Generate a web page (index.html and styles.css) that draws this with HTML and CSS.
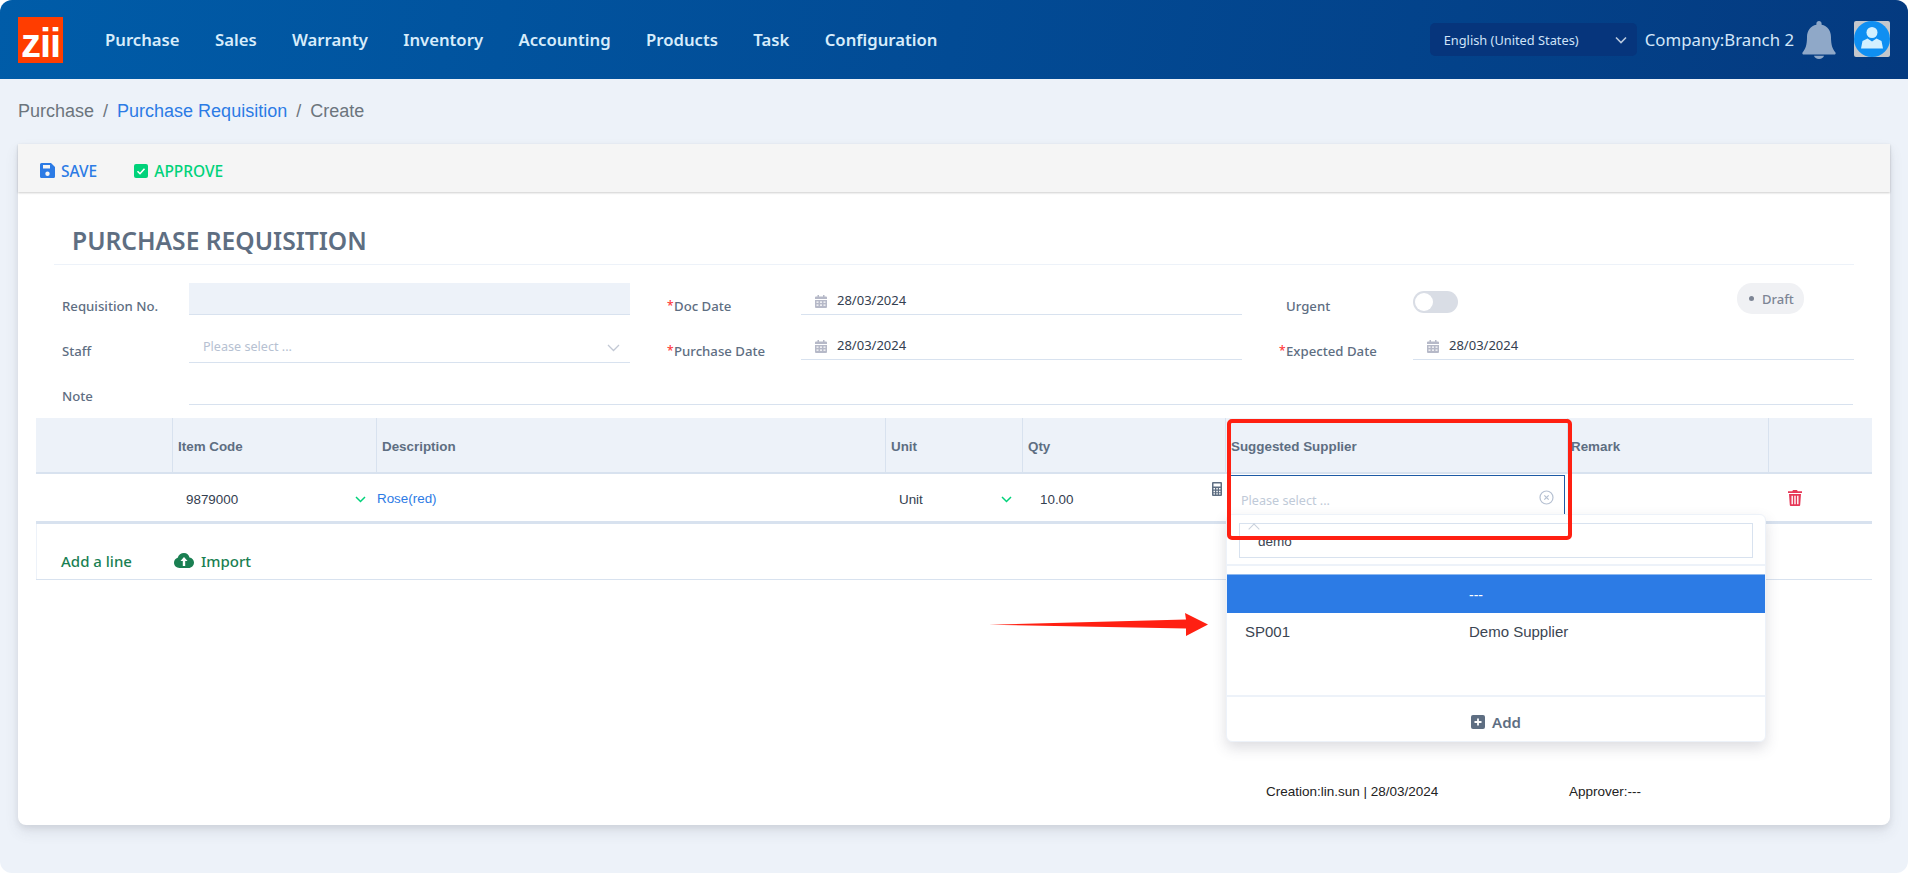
FILE: index.html
```html
<!DOCTYPE html>
<html lang="en">

<head>
  <meta charset="UTF-8" />
  <meta name="viewport" content="width=device-width, initial-scale=1.0" />
  <title>Purchase Requisition</title>
  <link rel="stylesheet" href="styles.css">
</head>

<body>
  <div class="app">
    <header class="topbar">
      <div class="logo">zii</div>
      <nav class="nav">
        <a>Purchase</a>
        <a>Sales</a>
        <a>Warranty</a>
        <a>Inventory</a>
        <a>Accounting</a>
        <a>Products</a>
        <a>Task</a>
        <a>Configuration</a>
      </nav>
      <div class="topbar-right">
        <div class="lang">
          <span>English (United States)</span>
          <svg class="chev" width="12" height="8" viewBox="0 0 12 8"><path d="M1 1.5l5 5 5-5" fill="none" stroke="#b9c9de" stroke-width="1.6"/></svg>
        </div>
        <div class="company">Company:Branch 2</div>
        <svg class="bell" width="34" height="38" viewBox="0 0 34 38">
          <path d="M17 0c1.500 0 2.600 1.100 2.600 2.600v1.200C25.500 5 29 10 29 16c0 8 1.500 12 4.300 15.200.8 1 .2 2.300-1 2.300H1.700c-1.200 0-1.800-1.300-1-2.300C3.500 28 5 24 5 16 5 10 8.500 5 14.400 3.800V2.600C14.400 1.100 15.500 0 17 0z" fill="#8fa8c8"/>
          <path d="M12 34.800h10c-.4 2-2.400 3.200-5 3.200s-4.600-1.200-5-3.200z" fill="#8fa8c8"/>
        </svg>
        <div class="avatar">
          <svg width="36" height="36" viewBox="0 0 36 36">
            <rect width="36" height="36" rx="2" fill="#c4c7cc"/>
            <circle cx="18" cy="18" r="18" fill="#0f8ff2"/>
            <circle cx="18" cy="11.500" r="5.500" fill="#d3f0ff"/>
            <path d="M13.500 17.500l4.500 3 4.500-3 5 2.500 1.500 7.500H7l1.500-7.500z" fill="#d3f0ff"/>
          </svg>
        </div>
      </div>
    </header>

    <main class="content">
      <div class="breadcrumb">
        <span>Purchase</span><i>/</i><a>Purchase Requisition</a><i>/</i><span>Create</span>
      </div>

      <section class="card">
        <div class="toolbar">
          <a class="tool tool-save">
            <svg width="15" height="15" viewBox="0 0 15 15"><path d="M1.500 0H11l4 4v9.500A1.500 1.500 0 0 1 13.500 15h-12A1.500 1.500 0 0 1 0 13.500v-12A1.500 1.500 0 0 1 1.500 0zM3 2v3.500h7V2zm4.500 6.500a2.200 2.200 0 1 0 0 4.400 2.200 2.200 0 0 0 0-4.400z" fill="#2c7be5" fill-rule="evenodd"/></svg>
            SAVE
          </a>
          <a class="tool tool-approve">
            <svg width="14" height="14" viewBox="0 0 14 14"><rect width="14" height="14" rx="2" fill="#00d27a"/><path d="M3.500 7.200l2.500 2.500 4.500-5" fill="none" stroke="#fff" stroke-width="1.600"/></svg>
            APPROVE
          </a>
        </div>

        <h1 class="title">PURCHASE REQUISITION</h1>

        <div class="form">
          <label class="lbl">Requisition No.</label>
          <div class="field field-filled"></div>
          <label class="lbl lbl-mid req">Doc Date</label>
          <div class="field date">
            <svg class="cal" width="12" height="14" viewBox="0 0 12 14"><path d="M0 3.500A1 1 0 0 1 1 2.500h1.500V1h1.500v1.500h4V1h1.500v1.500H11a1 1 0 0 1 1 1V5H0zM0 6h12v7a1 1 0 0 1-1 1H1a1 1 0 0 1-1-1zm1.500 1.500v1.300h2V7.500zm3.500 0v1.300h2V7.500zm3.500 0v1.300h2V7.500zM1.500 10.500v1.300h2v-1.300zm3.500 0v1.300h2v-1.300zm3.500 0v1.300h2v-1.300z" fill="#b6b9c8" fill-rule="evenodd"/></svg>
            28/03/2024
          </div>
          <label class="lbl lbl-mid">Urgent</label>
          <div class="urgent">
            <span class="toggle"></span>
            <span class="status">Draft</span>
          </div>

          <label class="lbl">Staff</label>
          <div class="field select">
            <span>Please select ...</span>
            <svg width="13" height="8" viewBox="0 0 13 8"><path d="M1 1l5.500 5.500L12 1" fill="none" stroke="#c2c8d4" stroke-width="1.300"/></svg>
          </div>
          <label class="lbl lbl-mid req">Purchase Date</label>
          <div class="field date">
            <svg class="cal" width="12" height="14" viewBox="0 0 12 14"><path d="M0 3.500A1 1 0 0 1 1 2.500h1.500V1h1.500v1.500h4V1h1.500v1.500H11a1 1 0 0 1 1 1V5H0zM0 6h12v7a1 1 0 0 1-1 1H1a1 1 0 0 1-1-1zm1.500 1.500v1.300h2V7.500zm3.500 0v1.300h2V7.500zm3.500 0v1.300h2V7.500zM1.500 10.500v1.300h2v-1.300zm3.500 0v1.300h2v-1.300zm3.500 0v1.300h2v-1.300z" fill="#b6b9c8" fill-rule="evenodd"/></svg>
            28/03/2024
          </div>
          <label class="lbl lbl-mid req">Expected Date</label>
          <div class="field date">
            <svg class="cal" width="12" height="14" viewBox="0 0 12 14"><path d="M0 3.500A1 1 0 0 1 1 2.500h1.500V1h1.500v1.500h4V1h1.500v1.500H11a1 1 0 0 1 1 1V5H0zM0 6h12v7a1 1 0 0 1-1 1H1a1 1 0 0 1-1-1zm1.500 1.500v1.300h2V7.500zm3.500 0v1.300h2V7.500zm3.500 0v1.300h2V7.500zM1.500 10.500v1.300h2v-1.300zm3.500 0v1.300h2v-1.300zm3.500 0v1.300h2v-1.300z" fill="#b6b9c8" fill-rule="evenodd"/></svg>
            28/03/2024
          </div>

          <label class="lbl">Note</label>
          <div class="field field-note"></div>
        </div>

        <div class="lines">
          <table class="grid">
            <colgroup>
              <col class="c1"><col class="c2"><col class="c3"><col class="c4"><col class="c5"><col class="c6"><col class="c7"><col class="c8">
            </colgroup>
            <thead>
              <tr>
                <th></th>
                <th>Item Code</th>
                <th>Description</th>
                <th>Unit</th>
                <th>Qty</th>
                <th>Suggested Supplier</th>
                <th class="th-remark">Remark</th>
                <th></th>
              </tr>
            </thead>
            <tbody>
              <tr>
                <td></td>
                <td>
                  <div class="cell cell-item">
                    <span>9879000</span>
                    <svg width="11" height="7" viewBox="0 0 11 7"><path d="M1 1l4.500 4.500L10 1" fill="none" stroke="#00d27a" stroke-width="1.500"/></svg>
                  </div>
                </td>
                <td><a class="desc">Rose(red)</a></td>
                <td>
                  <div class="cell cell-unit">
                    <span>Unit</span>
                    <svg width="11" height="7" viewBox="0 0 11 7"><path d="M1 1l4.500 4.500L10 1" fill="none" stroke="#00d27a" stroke-width="1.500"/></svg>
                  </div>
                </td>
                <td>
                  <div class="cell cell-qty">
                    <span>10.00</span>
                    <svg class="calc" width="10" height="14" viewBox="0 0 10 14"><path d="M1 0h8a1 1 0 0 1 1 1v12a1 1 0 0 1-1 1H1a1 1 0 0 1-1-1V1a1 1 0 0 1 1-1zm.5 1.500v3h7v-3zm0 4.500v1.500h1.500V6zm2.800 0v1.500h1.500V6zm2.700 0v1.500h1.500V6zm-5.500 2.700v1.500h1.500V8.700zm2.800 0v1.500h1.500V8.700zm2.700 0v1.500h1.500V8.700zm-5.500 2.600v1.200h1.500v-1.200zm2.800 0v1.200h1.500v-1.200zm2.700 0v1.200h1.500v-1.200z" fill="#5e6e82" fill-rule="evenodd"/></svg>
                  </div>
                </td>
                <td class="td-supplier">
                  <div class="supplier-input">
                    <span>Please select ...</span>
                    <svg width="15" height="15" viewBox="0 0 15 15"><circle cx="7.500" cy="7.500" r="6.500" fill="none" stroke="#b6c1d2" stroke-width="1.200"/><path d="M5.300 5.300l4.400 4.400M9.700 5.300l-4.400 4.400" stroke="#b6c1d2" stroke-width="1.200"/></svg>
                  </div>
                </td>
                <td></td>
                <td class="td-del">
                  <svg width="14" height="16" viewBox="0 0 14 16"><path d="M5 0h4l.7 1.300H14V3H0V1.300h4.300zM1 4h12l-.8 11a1 1 0 0 1-1 1H2.800a1 1 0 0 1-1-1zm2.500 1.800v8.500h1.400V5.800zm2.800 0v8.500h1.400V5.800zm2.800 0v8.500h1.400V5.800z" fill="#e63757" fill-rule="evenodd"/></svg>
                </td>
              </tr>
            </tbody>
          </table>
          <div class="line-actions">
            <a>Add a line</a>
            <a class="import">
              <svg width="20" height="15" viewBox="0 0 20 15"><path d="M10 0c2.800 0 5 1.900 5.500 4.400C18 4.800 20 6.900 20 9.500 20 12.500 17.500 15 14.500 15h-9C2.500 15 0 12.700 0 9.800c0-2.400 1.500-4.400 3.700-5C4.500 2 7 0 10 0zm0 4L6.500 8h2.300v5h2.400V8h2.300z" fill="#1a7f52" fill-rule="evenodd"/></svg>
              Import
            </a>
          </div>
        </div>

        <div class="card-foot">
          <span class="creation">Creation:lin.sun | 28/03/2024</span>
          <span>Approver:---</span>
        </div>

        <!-- dropdown + annotations sit on top of the table -->
        <div class="dropdown">
          <div class="search">
            <span class="search-caret"></span>
            <span>demo</span>
          </div>
          <div class="dd-option dd-active"><span></span><span>---</span></div>
          <div class="dd-option dd-row"><span>SP001</span><span>Demo Supplier</span></div>
          <div class="dd-foot">
            <svg width="14" height="14" viewBox="0 0 14 14"><rect width="14" height="14" rx="2" fill="#5e6e82"/><path d="M7 3.500v7M3.500 7h7" stroke="#fff" stroke-width="1.800"/></svg>
            Add
          </div>
        </div>
        <div class="mark-box"></div>
        <svg class="mark-arrow" width="220" height="24" viewBox="0 0 220 24">
          <path d="M0 11.800L197 6.500 196 0 219 11.500 197 23 197 15.500z" fill="#ff2012"/>
        </svg>
      </section>
    </main>
  </div>
</body>

</html>
```

FILE: styles.css
```css
:root {
  --page-bg: #edf2f9;
  --line: #d8e2ef;
  --blue: #2c7be5;
  --green: #00d27a;
  --dark-green: #1a7f52;
  --label: #5e6e82;
  --text: #344050;
}

* {
  box-sizing: border-box;
}

html,
body {
  margin: 0;
  height: 100%;
  background: #fff;
}

body {
  font-family: "Noto Sans", "Open Sans", sans-serif;
  overflow: hidden;
}

.app {
  height: 873px;
  display: flex;
  flex-direction: column;
  background: var(--page-bg);
  border-radius: 12px;
  overflow: hidden;
}

/* top bar */
.topbar {
  height: 79px;
  flex: none;
  display: flex;
  align-items: center;
  padding: 0 18px;
  background: linear-gradient(100deg, #005ca8 0%, #024b95 50%, #043a80 100%);
}

.logo {
  width: 45px;
  height: 46px;
  padding-top: 6px;
  background: #ff3d00;
  color: #fff;
  font-family: "Liberation Sans", sans-serif;
  font-size: 40px;
  font-weight: bold;
  line-height: 40px;
  letter-spacing: -1px;
  text-align: center;
}

.nav {
  display: flex;
  gap: 35.4px;
  margin-left: 42px;
  color: #d7ecfb;
  font-size: 16.7px;
  font-weight: 600;
}

.topbar-right {
  margin-left: auto;
  display: flex;
  align-items: center;
}

.lang {
  width: 207px;
  height: 33px;
  display: flex;
  align-items: center;
  justify-content: space-between;
  padding: 0 10px 0 14px;
  border-radius: 5px;
  background: #06357c;
  color: #cfe3f8;
  font-size: 12.8px;
}

.company {
  margin-left: 8px;
  color: #d3e7f9;
  font-size: 16.8px;
  white-space: nowrap;
}

.bell {
  margin-left: 8px;
}

.avatar {
  margin-left: 18px;
  height: 36px;
  margin-top: -2px;
}

/* breadcrumb */
.content {
  flex: 1;
  padding: 0 18px;
}

.breadcrumb {
  height: 65px;
  display: flex;
  align-items: center;
  font-family: "Liberation Sans", Arial, sans-serif;
  font-size: 18px;
  color: #6c757d;
}

.breadcrumb a {
  color: var(--blue);
}

.breadcrumb i {
  font-style: normal;
  margin: 0 9px;
}

/* card */
.card {
  position: relative;
  height: 681px;
  display: flex;
  flex-direction: column;
  background: #fff;
  border-radius: 0 0 8px 8px;
  box-shadow: 0 7px 14px 0 rgba(65, 69, 88, 0.1), 0 3px 6px 0 rgba(0, 0, 0, 0.07);
}

.toolbar {
  height: 48px;
  flex: none;
  display: flex;
  align-items: center;
  gap: 37px;
  padding: 5px 0 0 22px;
  background: #f5f5f5;
  box-shadow: 0 1px 2px rgba(0, 0, 0, 0.2);
}

.tool {
  display: flex;
  align-items: center;
  gap: 6px;
  font-size: 15.5px;
  font-weight: 500;
}

.tool-save {
  color: var(--blue);
}

.tool-approve {
  color: var(--green);
}

.title {
  height: 73px;
  margin: 0 36px;
  padding: 33px 0 0 18px;
  border-bottom: 1px solid var(--page-bg);
  color: var(--label);
  font-size: 24.6px;
  font-weight: 600;
  line-height: 32px;
}

/* form */
.form {
  display: grid;
  grid-template-columns: 127px 441px 171px 441px 171px 441px;
  grid-auto-rows: 32px;
  row-gap: 13px;
  margin: 18px 0 13px 44px;
}

.lbl {
  height: 32px;
  padding-top: 14px;
  color: var(--label);
  font-size: 13.2px;
  font-weight: 500;
  line-height: 18px;
  white-space: nowrap;
}

.lbl-mid {
  padding-left: 44px;
}

.req {
  position: relative;
}

.req::before {
  content: "*";
  position: absolute;
  left: 37px;
  top: 14px;
  color: #ff3b3b;
  font-size: 12px;
}

.field {
  height: 32px;
  border-bottom: 1px solid var(--line);
}

.field-filled {
  background: var(--page-bg);
}

.field-note {
  grid-column: 2 / 7;
  width: 1664px;
}

.date {
  display: flex;
  align-items: flex-start;
  gap: 10px;
  padding: 8px 0 0 14px;
  color: var(--text);
  font-size: 13px;
  line-height: 18px;
}

.cal {
  margin-top: 3px;
}

.select {
  height: 35px;
  display: flex;
  align-items: flex-start;
  justify-content: space-between;
  padding: 10px 10px 0 14px;
  color: #b6c1d2;
  font-size: 12.6px;
  line-height: 18px;
}

.select svg {
  margin-top: 6px;
}

.urgent {
  display: flex;
  align-items: flex-start;
  justify-content: space-between;
  padding-right: 50px;
  margin-top: 8px;
}

.toggle {
  position: relative;
  width: 45px;
  height: 22px;
  border-radius: 11px;
  background: #d9dde5;
}

.toggle::after {
  content: "";
  position: absolute;
  left: 2px;
  top: 2px;
  width: 18px;
  height: 18px;
  border-radius: 50%;
  background: #fff;
}

.status {
  display: flex;
  align-items: center;
  gap: 8px;
  height: 31px;
  padding: 0 12px;
  margin-top: -8px;
  width: 67px;
  border-radius: 15px;
  background: #f0f1f4;
  color: #7d8595;
  font-size: 13px;
  font-weight: 500;
}

.status::before {
  content: "";
  width: 5px;
  height: 5px;
  flex: none;
  border-radius: 50%;
  background: #7d8595;
}

/* lines table */
.lines {
  margin: 0 18px;
  border-bottom: 1px solid var(--line);
}

.grid {
  width: 100%;
  table-layout: fixed;
  border-collapse: separate;
  border-spacing: 0;
  font-family: "Liberation Sans", Arial, sans-serif;
  font-size: 13.4px;
}

.c1 { width: 136px; }
.c2 { width: 204px; }
.c3 { width: 509px; }
.c4 { width: 137px; }
.c5 { width: 203px; }
.c6 { width: 342px; }
.c7 { width: 201px; }
.c8 { width: 104px; }

.grid th {
  height: 56px;
  padding: 2px 0 0 5px;
  border-left: 1px solid var(--line);
  border-bottom: 2px solid var(--line);
  background: var(--page-bg);
  color: var(--label);
  font-weight: bold;
  text-align: left;
}

.grid th:first-child {
  border-left: none;
}

.grid th.th-remark {
  padding-left: 3px;
}

.grid td {
  height: 50px;
  padding: 0;
  border-bottom: 3px solid var(--line);
  color: var(--text);
  vertical-align: top;
}

.cell {
  display: flex;
  justify-content: space-between;
  align-items: center;
  height: 47px;
  padding-top: 4px;
}

.cell-item {
  padding-left: 14px;
  padding-right: 10px;
}

.cell-unit {
  padding-left: 14px;
  padding-right: 10px;
}

.cell-qty {
  padding-left: 18px;
  padding-right: 3px;
}

.calc {
  align-self: flex-start;
  margin-top: 4px;
}

.desc {
  display: block;
  padding: 16px 0 0 1px;
  color: var(--blue);
  line-height: 18px;
}

.supplier-input {
  display: flex;
  align-items: center;
  justify-content: space-between;
  width: 335px;
  height: 39px;
  margin: 1px 0 0 5px;
  padding: 11px 10px 0 11px;
  border-top: 1px solid #1d5aa5;
  border-right: 1px solid #1d5aa5;
  color: #c0cad8;
  font-family: "Noto Sans", sans-serif;
  font-size: 12.6px;
}

.supplier-input svg {
  margin-top: -7px;
}

.td-del {
  text-align: left;
  padding-left: 20px !important;
}

.td-del svg {
  margin: 16px 0 0 0;
}

.line-actions {
  height: 55px;
  display: flex;
  align-items: center;
  gap: 42px;
  padding: 18px 0 0 24px;
  border-left: 1px solid var(--page-bg);
  color: var(--dark-green);
  font-size: 15px;
  font-weight: 500;
}

.import {
  display: flex;
  align-items: center;
  gap: 7px;
}

.card-foot {
  margin-top: auto;
  display: flex;
  padding: 0 0 24px 1248px;
  color: #222;
  font-family: "Liberation Sans", Arial, sans-serif;
  font-size: 13.5px;
  line-height: 18px;
}

.creation {
  width: 303px;
}

/* supplier dropdown */
.dropdown {
  position: absolute;
  left: 1208px;
  top: 370px;
  width: 540px;
  height: 228px;
  display: flex;
  flex-direction: column;
  background: #fff;
  border: 1px solid var(--page-bg);
  border-radius: 6px;
  box-shadow: 0 6px 14px rgba(65, 69, 88, 0.18);
  font-family: "Liberation Sans", Arial, sans-serif;
  font-size: 15px;
  color: #3b4552;
}

.search {
  position: relative;
  flex: none;
  height: 35px;
  margin: 8px 12px 8px;
  padding: 10px 0 0 18px;
  border: 1px solid var(--line);
  font-size: 13.5px;
  line-height: 16px;
}

/* thin rule between the search box and the options */
.search::after {
  content: "";
  position: absolute;
  left: -13px;
  right: -13px;
  bottom: -9px;
  height: 2px;
  background: var(--page-bg);
}

.search-caret {
  position: absolute;
  left: 10px;
  top: 1px;
  width: 8px;
  height: 8px;
  border-left: 1px solid #c8d0dc;
  border-top: 1px solid #c8d0dc;
  transform: rotate(45deg);
}

.dd-option {
  display: grid;
  grid-template-columns: 224px 1fr;
  flex: none;
  padding-left: 18px;
}

.dd-active {
  height: 39px;
  margin-top: 8px;
  border-top: 1px solid #8db8ef;
  background: var(--blue);
  color: #fff;
  font-size: 14px;
  line-height: 40px;
}

.dd-row {
  height: 82px;
  line-height: 38px;
}

.dd-foot {
  flex: 1;
  display: flex;
  align-items: center;
  justify-content: center;
  gap: 7px;
  padding-top: 6px;
  border-top: 2px solid var(--page-bg);
  color: var(--label);
  font-family: "Noto Sans", sans-serif;
  font-size: 15px;
  font-weight: 600;
}

/* red annotations */
.mark-box {
  position: absolute;
  left: 1209px;
  top: 275px;
  width: 345px;
  height: 121px;
  border: 4px solid #ff2012;
  border-radius: 5px;
}

.mark-arrow {
  position: absolute;
  left: 971px;
  top: 469px;
}
```
